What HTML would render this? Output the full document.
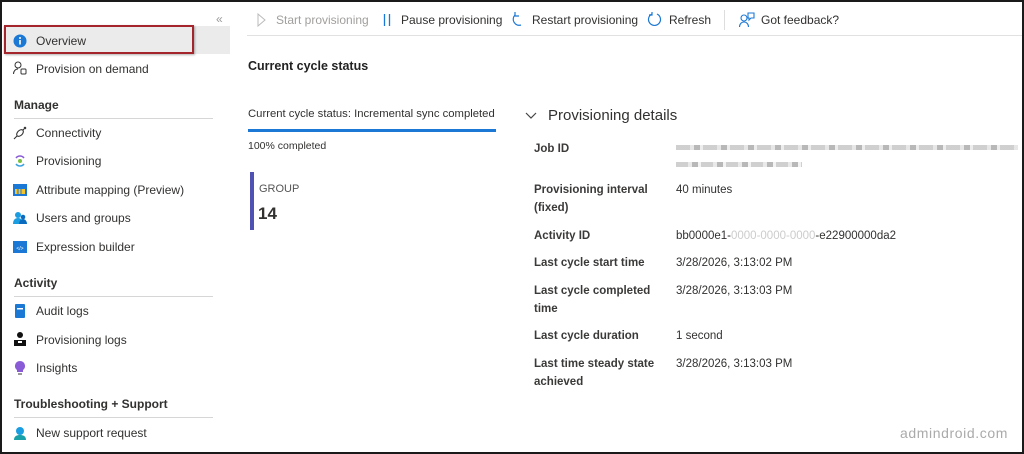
<!DOCTYPE html>
<html><head><meta charset="utf-8"><style>
*{margin:0;padding:0;box-sizing:border-box}
body{width:1024px;height:454px;position:relative;background:#fff;font-family:"Liberation Sans",sans-serif;color:#323130;overflow:hidden}
.frame{position:absolute;left:0;top:0;width:1024px;height:454px;border:2px solid #1a1a1a;z-index:10;pointer-events:none}
.a{position:absolute;white-space:nowrap;line-height:16px}
.nav{font-size:12px;left:36px}
.h{font-size:12px;font-weight:bold;left:14px}
.ln{position:absolute;left:14px;width:199px;height:1px;background:#d6d6d6}
.ic{position:absolute;left:13px;width:14px;height:14px}
.tb{font-size:12px;top:12px}
.lab{font-size:11.5px;font-weight:bold;left:534px;line-height:18px;color:#3b3a39}
.val{font-size:11.5px;left:676px;line-height:18px}
</style></head><body>
<div class="frame"></div>
<div class="a" style="left:216px;top:11px;font-size:12px;color:#999">«</div>
<div style="position:absolute;left:3px;top:26px;width:227px;height:28px;background:#ebebeb"></div>
<div style="position:absolute;left:4px;top:25px;width:190px;height:29px;border:2px solid #a4262c;box-shadow:1px 1px 2px rgba(0,0,0,.3)"></div>
<svg class="ic" style="top:34px" viewBox="0 0 14 14"><circle cx="7" cy="7" r="6.5" fill="#1b78d4"/><rect x="6.2" y="6" width="1.6" height="4.5" fill="#fff"/><circle cx="7" cy="4" r="1" fill="#fff"/></svg>
<div class="a nav" style="top:33px">Overview</div>
<svg class="ic" style="top:61px" viewBox="0 0 14 14" fill="none" stroke="#333" stroke-width="1"><circle cx="5" cy="4" r="3"/><path d="M0.5 13c0-3 2-5 4.5-5"/><rect x="8" y="8" width="5" height="5" rx="1"/></svg>
<div class="a nav" style="top:61px">Provision on demand</div>
<div class="a h" style="top:97px">Manage</div><div class="ln" style="top:118px"></div>
<svg class="ic" style="top:126px" viewBox="0 0 14 14" fill="none" stroke="#333" stroke-width="1.1"><ellipse cx="7" cy="7" rx="2.5" ry="4" transform="rotate(45 7 7)"/><path d="M1 13l3-3M10 4l3-3M11 1l2 2"/></svg>
<div class="a nav" style="top:125px">Connectivity</div>
<svg class="ic" style="top:154px" viewBox="0 0 14 14" fill="none" stroke-width="1.5"><path d="M3 4a5 5 0 0 1 8 0" stroke="#8a5bd6"/><path d="M11 10a5 5 0 0 1-8 0" stroke="#3aa0e0"/><circle cx="7" cy="7" r="2" fill="#7ac142" stroke="none"/></svg>
<div class="a nav" style="top:153px">Provisioning</div>
<svg class="ic" style="top:183px" viewBox="0 0 14 14"><rect x="0" y="1" width="14" height="12" fill="#1b78d4"/><rect x="2" y="6" width="10" height="5" fill="#f4c430"/><path d="M5 6v5M8 6v5" stroke="#1b78d4"/></svg>
<div class="a nav" style="top:182px">Attribute mapping (Preview)</div>
<svg class="ic" style="top:211px" viewBox="0 0 14 14"><circle cx="5" cy="4" r="3" fill="#1b9de2"/><path d="M0 13c0-4 2-6 5-6s5 2 5 6z" fill="#1b9de2"/><circle cx="10" cy="6" r="2.3" fill="#0a6bbf"/><path d="M6 13c0-3 2-5 4-5s4 2 4 5z" fill="#0a6bbf"/></svg>
<div class="a nav" style="top:210px">Users and groups</div>
<svg class="ic" style="top:240px" viewBox="0 0 14 14"><rect x="0" y="1" width="14" height="12" fill="#1b78d4"/><text x="7" y="10" font-size="5" fill="#fff" text-anchor="middle" font-family="Liberation Sans">&lt;/&gt;</text></svg>
<div class="a nav" style="top:239px">Expression builder</div>
<div class="a h" style="top:275px">Activity</div><div class="ln" style="top:296px"></div>
<svg class="ic" style="top:304px" viewBox="0 0 14 14"><rect x="2" y="0" width="10" height="14" rx="1" fill="#1b78d4"/><rect x="4" y="4" width="6" height="1.5" fill="#fff"/></svg>
<div class="a nav" style="top:303px">Audit logs</div>
<svg class="ic" style="top:332px" viewBox="0 0 14 14"><circle cx="7" cy="3" r="3" fill="#111"/><path d="M1 14V8h12v6z" fill="#111"/><rect x="5" y="9" width="4" height="2" fill="#fff"/></svg>
<div class="a nav" style="top:332px">Provisioning logs</div>
<svg class="ic" style="top:361px" viewBox="0 0 14 14"><path d="M7 0a5 5 0 0 1 3 9v2H4V9a5 5 0 0 1 3-9z" fill="#8a5bd6"/><rect x="5" y="12" width="4" height="2" fill="#999"/></svg>
<div class="a nav" style="top:360px">Insights</div>
<div class="a h" style="top:396px">Troubleshooting + Support</div><div class="ln" style="top:417px"></div>
<svg class="ic" style="top:426px" viewBox="0 0 14 14"><circle cx="7" cy="5" r="4" fill="#1b9de2"/><path d="M1 14c0-4 3-5 6-5s6 1 6 5z" fill="#18a0a8"/></svg>
<div class="a nav" style="top:425px">New support request</div>
<svg style="position:absolute;left:257px;top:13px" width="9" height="14" viewBox="0 0 9 14" fill="none" stroke="#bbb"><path d="M1 1l7 6-7 6z"/></svg>
<div class="a tb" style="left:276px;color:#a19f9d">Start provisioning</div>
<svg style="position:absolute;left:383px;top:14px" width="8" height="12"><path d="M1.5 0v12M6.5 0v12" stroke="#1b78d4" stroke-width="1.3"/></svg>
<div class="a tb" style="left:401px">Pause provisioning</div>
<svg style="position:absolute;left:511px;top:12px" width="13" height="15" viewBox="0 0 13 15" fill="none" stroke="#1b78d4" stroke-width="1.2"><path d="M10 13A6 6 0 0 1 4 3"/><path d="M4 0v4h4"/></svg>
<div class="a tb" style="left:532px">Restart provisioning</div>
<svg style="position:absolute;left:647px;top:12px" width="15" height="15" viewBox="0 0 15 15" fill="none" stroke="#1b78d4" stroke-width="1.2"><path d="M5 2A6 6 0 1 0 10 2"/><path d="M5 0v3H2"/></svg>
<div class="a tb" style="left:669px">Refresh</div>
<div style="position:absolute;left:724px;top:10px;width:1px;height:20px;background:#ddd"></div>
<svg style="position:absolute;left:739px;top:12px" width="16" height="16" viewBox="0 0 16 16" fill="none" stroke="#1b78d4" stroke-width="1.1"><circle cx="5" cy="6" r="3"/><path d="M0.5 15c0-3 2-5 4.5-5s4.5 2 4.5 5"/><path d="M9 1h6v5h-3l-2 2V6H9z"/></svg>
<div class="a tb" style="left:761px">Got feedback?</div>
<div style="position:absolute;left:247px;top:35px;width:775px;height:1px;background:#e1e1e1"></div>
<div class="a" style="left:248px;top:58px;font-size:12.5px;font-weight:bold;color:#222">Current cycle status</div>
<div class="a" style="left:248px;top:106px;font-size:11.3px">Current cycle status: Incremental sync completed</div>
<div style="position:absolute;left:248px;top:129px;width:248px;height:3px;background:#1b78d4"></div>
<div class="a" style="left:248px;top:138px;font-size:10.5px">100% completed</div>
<div style="position:absolute;left:250px;top:172px;width:4px;height:58px;background:#4f52b2"></div>
<div class="a" style="left:259px;top:181px;font-size:11px;color:#555">GROUP</div>
<div class="a" style="left:258px;top:204px;font-size:17px;font-weight:bold;line-height:20px">14</div>
<svg style="position:absolute;left:525px;top:112px" width="12" height="8"><path d="M1 1l5 5 5-5" fill="none" stroke="#444" stroke-width="1.2"/></svg>
<div class="a" style="left:548px;top:107px;font-size:15px;line-height:18px">Provisioning details</div>
<div class="a lab" style="top:140px">Job ID</div>
<div style="position:absolute;left:676px;top:145px;width:342px;height:5px;background:repeating-linear-gradient(90deg,#bbb 0 14px,#ddd 14px 18px,#999 18px 24px,#e5e5e5 24px 27px);opacity:.7"></div>
<div style="position:absolute;left:676px;top:162px;width:126px;height:5px;background:repeating-linear-gradient(90deg,#bbb 0 12px,#e0e0e0 12px 16px,#999 16px 22px,#eee 22px 25px);opacity:.7"></div>
<div class="a lab" style="top:181px">Provisioning interval<br>(fixed)</div>
<div class="a val" style="top:181px">40 minutes</div>
<div class="a lab" style="top:227px">Activity ID</div>
<div class="a val" style="top:227px">bb0000e1-<span style="color:#ccc">0000-0000-0000</span>-e22900000da2</div>
<div class="a lab" style="top:254px">Last cycle start time</div>
<div class="a val" style="top:254px">3/28/2026, 3:13:02 PM</div>
<div class="a lab" style="top:282px">Last cycle completed<br>time</div>
<div class="a val" style="top:282px">3/28/2026, 3:13:03 PM</div>
<div class="a lab" style="top:327px">Last cycle duration</div>
<div class="a val" style="top:327px">1 second</div>
<div class="a lab" style="top:355px">Last time steady state<br>achieved</div>
<div class="a val" style="top:355px">3/28/2026, 3:13:03 PM</div>
<div class="a" style="left:900px;top:425px;font-size:14px;color:#aaa;letter-spacing:0.6px">admindroid.com</div>
</body></html>
